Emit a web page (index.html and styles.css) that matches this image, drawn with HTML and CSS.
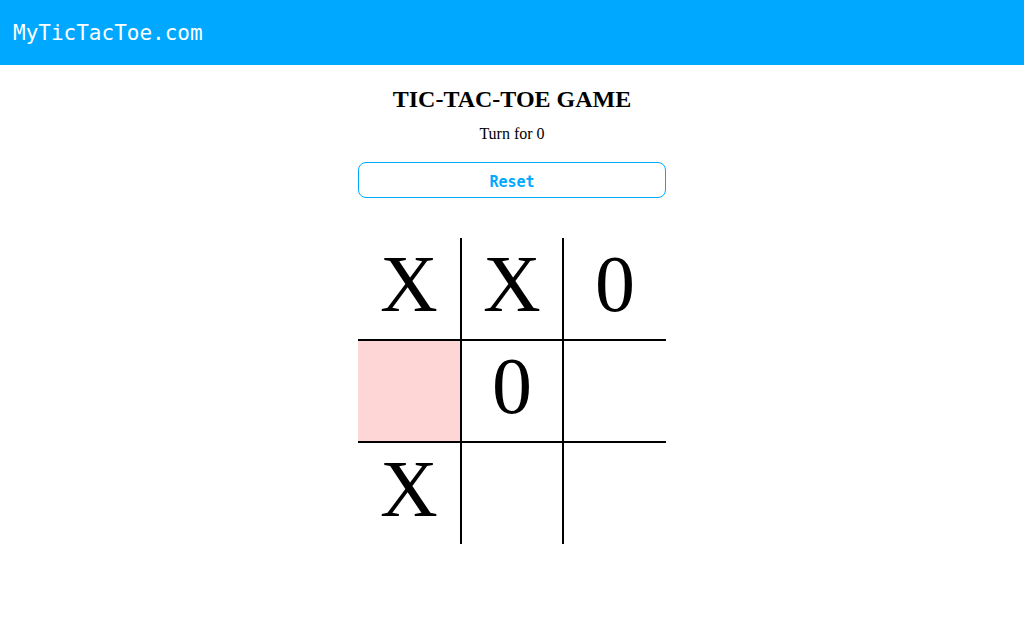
FILE: index.html
```html
<!DOCTYPE html>
<html lang="en">
<head>
<meta charset="utf-8">
<title>MyTicTacToe.com</title>
<link rel="stylesheet" href="styles.css">
</head>
<body>
<header class="topbar">
  <span class="brand">MyTicTacToe.com</span>
</header>
<main class="game">
  <h2 class="title">TIC-TAC-TOE GAME</h2>
  <p class="turn">Turn for 0</p>
  <button class="reset" type="button">Reset</button>
  <div class="board">
    <div class="cell">X</div>
    <div class="cell">X</div>
    <div class="cell">0</div>
    <div class="cell cell-hover"></div>
    <div class="cell">0</div>
    <div class="cell"></div>
    <div class="cell">X</div>
    <div class="cell"></div>
    <div class="cell"></div>
  </div>
</main>
</body>
</html>
```

FILE: styles.css
```css
html, body {
  margin: 0;
  padding: 0;
  background: #ffffff;
}

body {
  font-family: "Liberation Serif", "Times New Roman", serif;
  color: #000000;
}

.topbar {
  height: 65px;
  background: #00a9ff;
  display: flex;
  align-items: center;
  padding-left: 13px;
  box-sizing: border-box;
}

.brand {
  font-family: "DejaVu Sans Mono", "Liberation Mono", monospace;
  font-size: 21px;
  color: #ffffff;
  line-height: 24px;
}

.game {
  width: 308px;
  margin: 0 auto;
  display: flex;
  flex-direction: column;
  align-items: stretch;
}

.title {
  margin: 20px 0 0;
  font-size: 24px;
  line-height: 28px;
  font-weight: bold;
  text-align: center;
}

.turn {
  margin: 12px 0 0;
  font-size: 16px;
  line-height: 18px;
  text-align: center;
}

.reset {
  margin-top: 19px;
  height: 36px;
  border: 1px solid #00a9ff;
  border-radius: 8px;
  background: #ffffff;
  color: #00a9ff;
  font-family: "DejaVu Sans Mono", "Liberation Mono", monospace;
  font-weight: bold;
  font-size: 15px;
  padding: 3px 0 0;
  cursor: pointer;
}

.board {
  margin-top: 40px;
  display: grid;
  grid-template-columns: 104px 102px 102px;
  grid-template-rows: 103px 102px 101px;
}

.cell {
  box-sizing: border-box;
  display: flex;
  align-items: center;
  justify-content: center;
  font-size: 80px;
  line-height: 1;
  padding-bottom: 10px;
}

.cell:nth-child(3n+1),
.cell:nth-child(3n+2) {
  border-right: 2px solid #000000;
}

.cell:nth-child(-n+6) {
  border-bottom: 2px solid #000000;
}

.cell-hover {
  background: #ffd6d6;
}
```
